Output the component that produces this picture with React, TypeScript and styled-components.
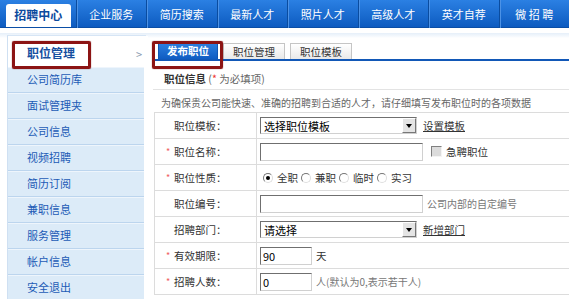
import React from "react";
import styled, { createGlobalStyle } from "styled-components";

const GlobalStyle = createGlobalStyle`
  html, body {
    margin: 0;
    padding: 0;
    background: #fff;
  }
  body {
    font-family: "Noto Sans CJK SC", "Liberation Sans", sans-serif;
    font-size: 10px;
    color: #333;
    overflow: hidden;
  }
`;

const navItems = ["企业服务", "简历搜索", "最新人才", "照片人才", "高级人才", "英才自荐", "微 招 聘"];

const sideItems = ["公司简历库", "面试管理夹", "公司信息", "视频招聘", "简历订阅", "兼职信息", "服务管理", "帐户信息", "安全退出"];

const Page = styled.div`
  position: relative;
  width: 569px;
  height: 299px;
  overflow: hidden;
`;

const TopNav = styled.div`
  display: flex;
  align-items: flex-end;
  height: 28px;
  padding-left: 6px;
  background: linear-gradient(#2b80e3, #0d5bc0);
  border-bottom: 1px solid #0a4ea6;
  box-sizing: border-box;
`;

const NavActive = styled.div`
  width: 65px;
  height: 23px;
  margin-right: 5px;
  background: #fff;
  border-radius: 3px 3px 0 0;
  color: #0c4a9e;
  font-weight: bold;
  font-size: 12px;
  line-height: 22px;
  text-align: center;
`;

const NavItem = styled.div`
  width: 71px;
  height: 28px;
  align-self: stretch;
  display: flex;
  align-items: center;
  justify-content: center;
  color: #fff;
  font-size: 11px;
  border-left: 1px solid #0a4c9f;
  box-shadow: inset 1px 0 0 #4c92e6;
  box-sizing: border-box;
  white-space: pre;
`;

const Main = styled.div`
  display: flex;
  margin-top: 5px;
  background: linear-gradient(#e6eff9, #f3f8fd 3px, #fff 5px);
`;

const Sidebar = styled.div`
  width: 138px;
  flex-shrink: 0;
  margin-left: 7px;
  margin-top: 2px;
  border-left: 1px solid #cfe0f2;
  border-top: 1px solid #d6e5f5;
  background: #fff;
  font-size: 11px;
`;

const SideActive = styled.div`
  position: relative;
  height: 31px;
  padding-top: 4px;
  box-sizing: border-box;
  background: #fff;
  color: #164f9f;
  font-weight: bold;
  font-size: 12px;
  line-height: 26px;
  padding-left: 19px;
  margin-right: -2px;
`;

const Arrow = styled.span`
  position: absolute;
  right: 6px;
  top: 5px;
  color: #8a9bb0;
  font-weight: normal;
  font-size: 11px;
`;

const SideItem = styled.div`
  height: 25px;
  margin-right: 2px;
  padding-left: 19px;
  line-height: 25px;
  background: #dcebf8;
  color: #1d5bb6;
  border-bottom: 1px solid #bcd5ee;
  box-shadow: inset 0 1px 0 #eef5fc;
`;

const Content = styled.div`
  flex: 1;
  min-width: 0;
  margin-left: 7px;
  margin-top: 2px;
`;

const Tabs = styled.div`
  display: flex;
  align-items: flex-end;
  gap: 5px;
  padding: 8px 0 0 5px;
  height: 26px;
  box-sizing: border-box;
  border-bottom: 2px solid #1258b7;
`;

const Tab = styled.div<{ $active?: boolean }>`
  height: ${(p) => (p.$active ? 18 : 16)}px;
  width: ${(p) => (p.$active ? 60 : 62)}px;
  box-sizing: border-box;
  text-align: center;
  font-size: 10.5px;
  line-height: ${(p) => (p.$active ? 17 : 15)}px;
  font-weight: ${(p) => (p.$active ? "bold" : "normal")};
  color: ${(p) => (p.$active ? "#fff" : "#333")};
  background: ${(p) =>
    p.$active ? "linear-gradient(#2e82e2, #0f5cc2)" : "linear-gradient(#ffffff, #e9e9e9)"};
  border: 1px solid ${(p) => (p.$active ? "#0f56b4" : "#c5c5c5")};
  border-bottom: none;
`;

const Heading = styled.div`
  margin: 10px 0 0 11px;
  line-height: 16px;
  height: 16px;
  color: #666;
  font-size: 10.5px;

  b {
    color: #333;
  }
  i {
    font-style: normal;
    color: #e33;
  }
`;

const Divider = styled.div`
  height: 1px;
  margin-top: 2px;
  background: #e3e3e3;
`;

const Note = styled.div`
  margin: 6px 0 0 8px;
  line-height: 14px;
  color: #666;
  white-space: nowrap;
`;

const Table = styled.div`
  margin: 2px 0 0 1px;
  border-top: 1px solid #dcdcdc;
  border-left: 1px solid #dcdcdc;
`;

const Row = styled.div`
  display: flex;
  height: 25px;
  border-bottom: 1px solid #dcdcdc;
`;

const Label = styled.div`
  width: 102px;
  flex-shrink: 0;
  border-right: 1px solid #dcdcdc;
  display: flex;
  align-items: center;
  padding-left: 11px;
  box-sizing: border-box;
  color: #333;
  font-size: 10.5px;
  white-space: nowrap;
`;

const Star = styled.span`
  display: inline-block;
  width: 8px;
  color: #f06060;
  font-size: 9px;
`;

const Field = styled.div`
  display: flex;
  align-items: center;
  padding-left: 3px;
  gap: 4px;
  white-space: nowrap;
  font-size: 10.5px;
`;

const TextBox = styled.div<{ $w: number }>`
  width: ${(p) => p.$w}px;
  height: 18px;
  box-sizing: border-box;
  border: 1px solid #d0d0d0;
  border-top-color: #6f6f6f;
  border-left-color: #6f6f6f;
  background: #fff;
  padding-left: 2px;
  line-height: 16px;
  font-size: 11px;
  color: #000;
`;

const Select = styled.div`
  width: 157px;
  height: 17px;
  box-sizing: border-box;
  border: 1px solid #d0d0d0;
  border-top-color: #6f6f6f;
  border-left-color: #6f6f6f;
  display: flex;
  justify-content: space-between;
  align-items: center;
  padding-left: 3px;
  color: #000;
  font-size: 11px;
`;

const DropBtn = styled.span`
  width: 14px;
  height: 15px;
  box-sizing: border-box;
  background: #e4e4e4;
  border: 1px solid #fff;
  border-right-color: #777;
  border-bottom-color: #777;
  position: relative;

  &::after {
    content: "";
    position: absolute;
    left: 3px;
    top: 5px;
    border-left: 3px solid transparent;
    border-right: 3px solid transparent;
    border-top: 4px solid #000;
  }
`;

const Link = styled.span`
  text-decoration: underline;
  color: #333;
  margin-left: 2px;
`;

const Hint = styled.span`
  color: #777;
  font-size: 10px;
`;

const Check = styled.span`
  width: 11px;
  height: 11px;
  box-sizing: border-box;
  margin-left: 4px;
  background: #dcdcdc;
  border: 1px solid #f4f4f4;
  border-top-color: #808080;
  border-left-color: #808080;
`;

const Radio = styled.span<{ $on?: boolean }>`
  position: relative;
  width: 10px;
  height: 10px;
  box-sizing: border-box;
  border-radius: 50%;
  border: 1px solid #dedede;
  border-top-color: #777;
  border-left-color: #777;
  background: #fff;
  margin-left: ${(p) => (p.$on ? 3 : 0)}px;

  &::after {
    content: "";
    display: ${(p) => (p.$on ? "block" : "none")};
    position: absolute;
    left: 2px;
    top: 2px;
    width: 4px;
    height: 4px;
    border-radius: 50%;
    background: #000;
  }
`;

const RadioLabel = styled.span`
  margin-right: -1px;
`;

const Callout = styled.div<{ $x: number; $y: number; $w: number; $h: number }>`
  position: absolute;
  left: ${(p) => p.$x}px;
  top: ${(p) => p.$y}px;
  width: ${(p) => p.$w}px;
  height: ${(p) => p.$h}px;
  box-sizing: border-box;
  border: 3px solid #8c1414;
  border-radius: 2px;
  box-shadow: 0 0 1px #6a0d0d;
  pointer-events: none;
`;

export default function App() {
  return (
    <Page>
      <GlobalStyle />
      <TopNav>
        <NavActive>招聘中心</NavActive>
        {navItems.map((n) => (
          <NavItem key={n}>{n}</NavItem>
        ))}
      </TopNav>
      <Main>
        <Sidebar>
          <SideActive>
            职位管理
            <Arrow>&gt;</Arrow>
          </SideActive>
          {sideItems.map((s) => (
            <SideItem key={s}>{s}</SideItem>
          ))}
        </Sidebar>
        <Content>
          <Tabs>
            <Tab $active>发布职位</Tab>
            <Tab>职位管理</Tab>
            <Tab>职位模板</Tab>
          </Tabs>
          <Heading>
            <b>职位信息</b> (<i>*</i> 为必填项)
          </Heading>
          <Divider />
          <Note>为确保贵公司能快速、准确的招聘到合适的人才，请仔细填写发布职位时的各项数据</Note>
          <Table>
            <Row>
              <Label>
                <Star />
                职位模板：
              </Label>
              <Field>
                <Select>
                  选择职位模板
                  <DropBtn />
                </Select>
                <Link>设置模板</Link>
              </Field>
            </Row>
            <Row>
              <Label>
                <Star>*</Star>
                职位名称：
              </Label>
              <Field>
                <TextBox $w={163} />
                <Check />
                急聘职位
              </Field>
            </Row>
            <Row>
              <Label>
                <Star>*</Star>
                职位性质：
              </Label>
              <Field>
                <Radio $on />
                <RadioLabel>全职</RadioLabel>
                <Radio />
                <RadioLabel>兼职</RadioLabel>
                <Radio />
                <RadioLabel>临时</RadioLabel>
                <Radio />
                <RadioLabel>实习</RadioLabel>
              </Field>
            </Row>
            <Row>
              <Label>
                <Star />
                职位编号：
              </Label>
              <Field>
                <TextBox $w={163} />
                <Hint>公司内部的自定编号</Hint>
              </Field>
            </Row>
            <Row>
              <Label>
                <Star />
                招聘部门：
              </Label>
              <Field>
                <Select>
                  请选择
                  <DropBtn />
                </Select>
                <Link>新增部门</Link>
              </Field>
            </Row>
            <Row>
              <Label>
                <Star>*</Star>
                有效期限：
              </Label>
              <Field>
                <TextBox $w={52}>90</TextBox>
                <span>天</span>
              </Field>
            </Row>
            <Row>
              <Label>
                <Star>*</Star>
                招聘人数：
              </Label>
              <Field>
                <TextBox $w={52}>0</TextBox>
                <Hint>人(默认为0,表示若干人)</Hint>
              </Field>
            </Row>
          </Table>
        </Content>
      </Main>
      <Callout $x={12} $y={41} $w={79} $h={28} />
      <Callout $x={152} $y={41} $w={71} $h={28} />
    </Page>
  );
}
